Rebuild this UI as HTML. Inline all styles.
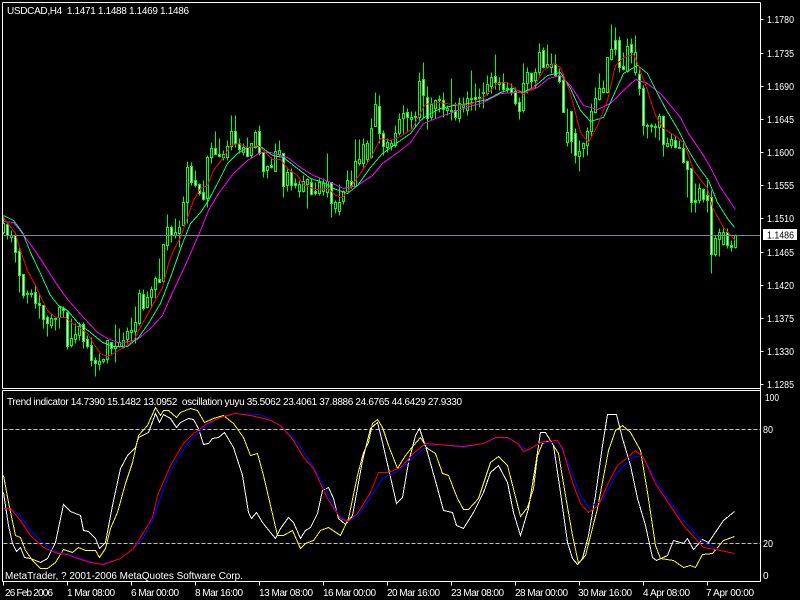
<!DOCTYPE html>
<html><head><meta charset="utf-8"><style>
html,body{margin:0;padding:0;background:#000;width:800px;height:600px;overflow:hidden}
svg{display:block}
text{font-family:"Liberation Sans",sans-serif;font-size:10px;fill:#fff}
</style></head><body>
<svg width="800" height="600" viewBox="0 0 800 600" xmlns="http://www.w3.org/2000/svg">
<rect width="800" height="600" fill="#000"/>
<g transform="translate(.5 .5)" shape-rendering="crispEdges">
<path fill="none" stroke="#00ff00" d="M3 216V234M7 222V239M11 230V242M15 232V262M19 247V292M23 274V298M27 290V303M31 289V297M35 284V308M39 293V318M43 305V328M47 315V336M51 313V328M55 317V330M59 305V328M63 306V317M67 311V349M71 318V347M75 323V343M79 322V340M83 322V348M87 335V348M91 337V366M95 357V376M99 353V370M103 358V363M107 340V363M111 342V355M115 324V362M119 328V347M123 332V348M127 327V343M131 317V340M135 306V343M139 289V325M143 289V310M147 291V308M151 286V308M155 276V298M159 258V282M163 244V282M167 214V250M171 225V242M175 218V238M179 220V247M183 196V225M187 161V223M191 162V185M195 170V187M199 183V195M203 180V200M207 155V207M211 142V163M215 131V154M219 138V157M223 150V160M227 140V160M231 115V150M235 115V147M239 138V153M243 143V155M247 137V157M251 143V157M255 130V148M259 125V155M263 152V177M267 165V178M271 157V168M275 143V171M279 140V157M283 153V197M287 167V191M291 168V190M295 178V188M299 180V197M303 175V192M307 178V208M311 178V195M315 182V195M319 178V195M323 178V195M327 153V197M331 182V217M335 200V213M339 184V215M343 190V204M347 170V191M351 170V188M355 139V187M359 139V165M363 138V167M367 140V162M371 118V158M375 92V126M379 95V143M383 130V155M387 138V152M391 140V150M395 125V147M399 113V135M403 105V133M407 108V132M411 111V128M415 111V126M419 72V120M423 62V118M427 86V129M431 97V120M435 99V118M439 95V112M443 92V117M447 105V115M451 78V120M455 102V120M459 97V122M463 97V112M467 91V115M471 70V110M475 83V110M479 88V107M483 82V108M487 75V95M491 72V93M495 54V89M499 77V90M503 73V92M507 82V93M511 83V95M515 87V105M519 97V119M523 63V112M527 67V93M531 72V90M535 68V88M539 43V75M543 47V68M547 44V68M551 53V73M555 54V77M559 68V83M563 73V112M567 108V146M571 127V153M575 128V163M579 140V171M583 142V157M587 127V155M591 103V137M595 87V113M599 73V100M603 80V93M607 57V93M611 24V60M615 27V55M619 36V72M623 52V70M627 38V72M631 38V63M635 35V75M639 66V95M643 85V135M647 123V138M651 123V132M655 123V137M659 113V140M663 115V156M667 137V147M671 133V148M675 135V148M679 140V148M683 140V163M687 160V197M691 168V212M695 183V212M699 183V203M703 188V202M707 180V212M711 190V273M715 235V256M719 228V256M723 228V245M727 228V248M731 240V251M735 234V248"/>
<path fill="#000" stroke="#00ff00" d="M2 223V232H4V223ZM10 235V237H12V235ZM26 293V294H28V293ZM30 293V294H32V293ZM50 318V325H52V318ZM58 307V317H60V307ZM70 338V345H72V338ZM74 334V339H76V334ZM78 326V335H80V326ZM98 361V364H100V361ZM102 359V361H104V359ZM106 340V359H108V340ZM114 346V348H116V346ZM118 342V346H120V342ZM122 340V347H124V340ZM126 331V339H128V331ZM130 330V332H132V330ZM134 322V331H136V322ZM138 293V323H140V293ZM146 297V307H148V297ZM150 289V297H152V289ZM154 278V289H156V278ZM162 244V281H164V244ZM166 227V245H168V227ZM174 232V235H176V232ZM178 227V233H180V227ZM182 202V225H184V202ZM186 167V202H188V167ZM206 157V198H208V157ZM210 148V157H212V148ZM222 154V157H224V154ZM226 146V157H228V146ZM230 131V146H232V131ZM242 147V152H244V147ZM250 143V155H252V143ZM254 132V147H256V132ZM266 166V170H268V166ZM274 151V171H276V151ZM278 150V154H280V150ZM286 172V185H288V172ZM298 184V191H300V184ZM302 181V191H304V181ZM306 179V184H308V179ZM318 182V193H320V182ZM322 183V191H324V183ZM326 181V192H328V181ZM334 202V208H336V202ZM338 202V211H340V202ZM342 191V201H344V191ZM346 180V191H348V180ZM354 161V186H356V161ZM358 159V163H360V159ZM362 144V163H364V144ZM366 143V159H368V143ZM370 128V157H372V128ZM374 104V126H376V104ZM386 142V147H388V142ZM390 143V146H392V143ZM394 133V145H396V133ZM398 119V133H400V119ZM402 113V118H404V113ZM410 117V119H412V117ZM414 116V117H416V116ZM418 81V117H420V81ZM430 104V117H432V104ZM434 100V108H436V100ZM438 99V100H440V99ZM446 108V110H448V108ZM450 110V111H452V110ZM458 103V118H460V103ZM462 105V107H464V105ZM466 98V110H468V98ZM470 98V99H472V98ZM478 97V98H480V97ZM482 92V93H484V92ZM486 84V93H488V84ZM490 77V86H492V77ZM498 82V84H500V82ZM506 88V89H508V88ZM522 83V110H524V83ZM526 72V83H528V72ZM534 72V80H536V72ZM538 52V72H540V52ZM546 64V67H548V64ZM550 64V67H552V64ZM566 132V142H568V132ZM578 151V156H580V151ZM582 143V148H584V143ZM586 131V145H588V131ZM590 111V131H592V111ZM594 98V112H596V98ZM598 88V99H600V88ZM602 88V92H604V88ZM606 57V92H608V57ZM610 49V59H612V49ZM626 46V71H628V46ZM634 52V72H636V52ZM658 116V127H660V116ZM666 143V146H668V143ZM670 139V145H672V139ZM698 188V200H700V188ZM714 238V254H716V238ZM718 232V239H720V232ZM722 232V244H724V232ZM734 235V247H736V235Z"/>
<path fill="#fff" stroke="#00ff00" d="M6 224V235H8V224ZM14 235V252H16V235ZM18 251V275H20V251ZM22 274V295H24V274ZM34 292V303H36V292ZM38 303V305H40V303ZM42 305V319H44V305ZM46 317V323H48V317ZM54 318V319H56V318ZM62 308V310H64V308ZM66 312V346H68V312ZM82 324V341H84V324ZM86 339V346H88V339ZM90 345V360H92V345ZM94 360V363H96V360ZM110 342V348H112V342ZM142 294V308H144V294ZM158 279V282H160V279ZM170 227V235H172V227ZM190 166V182H192V166ZM194 180V185H196V180ZM198 184V193H200V184ZM202 192V199H204V192ZM214 148V154H216V148ZM218 154V156H220V154ZM234 131V143H236V131ZM238 143V149H240V143ZM246 147V156H248V147ZM258 131V153H260V131ZM262 152V171H264V152ZM270 165V167H272V165ZM282 153V186H284V153ZM290 172V185H292V172ZM294 183V185H296V183ZM310 182V194H312V182ZM314 191V193H316V191ZM330 182V203H332V182ZM350 181V186H352V181ZM378 106V133H380V106ZM382 133V146H384V133ZM406 112V117H408V112ZM422 79V95H424V79ZM426 97V118H428V97ZM442 100V109H444V100ZM454 110V117H456V110ZM474 97V99H476V97ZM494 76V82H496V76ZM502 82V89H504V82ZM510 88V92H512V88ZM514 91V103H516V91ZM518 102V111H520V102ZM530 73V81H532V73ZM542 50V67H544V50ZM554 64V75H556V64ZM558 75V81H560V75ZM562 80V112H564V80ZM570 111V141H572V111ZM574 133V155H576V133ZM614 40V49H616V40ZM618 40V67H620V40ZM622 66V69H624V66ZM630 44V52H632V44ZM638 74V88H640V74ZM642 88V125H644V88ZM646 125V126H648V125ZM650 125V126H652V125ZM654 126V127H656V126ZM662 116V144H664V116ZM674 140V147H676V140ZM678 147V148H680V147ZM682 148V162H684V148ZM686 161V169H688V161ZM690 168V202H692V168ZM694 200V202H696V200ZM702 189V199H704V189ZM706 195V200H708V195ZM710 197V254H712V197ZM726 232V245H728V232ZM730 245V247H732V245Z"/>
<polyline fill="none" stroke="#ff00ff" points="3,221 13,222 22,233 33,248 43,263 57,285 68,300 83,317 97,332 107,338 120,343 137,339 150,328 162,315 173,290 187,260 200,230 208,210 218,193 233,173 247,160 260,152 270,152 287,157 300,167 313,175 330,182 343,188 357,185 372,175 382,163 400,150 410,142 423,123 443,115 463,108 483,102 500,93 517,92 523,92 537,87 548,78 560,75 570,85 583,105 597,109 610,103 623,90 635,79 647,83 660,93 680,117 688,133 703,155 710,167 720,187 735,209"/>
<polyline fill="none" stroke="#00ff7f" points="3,215 13,220 22,232 30,252 40,273 50,295 58,305 67,310 78,323 90,332 102,342 113,346 127,346 138,337 148,323 160,303 170,277 182,243 190,223 200,212 208,200 217,183 227,163 237,153 247,147 260,146 272,155 283,157 297,168 310,178 323,182 333,188 347,193 357,185 370,167 382,153 400,140 410,133 420,120 428,114 440,108 453,105 468,103 487,99 500,92 513,88 522,92 533,87 547,75 560,72 570,88 580,110 590,121 603,117 613,95 623,73 637,65 647,73 657,93 665,108 678,130 688,150 697,165 708,180 717,202 727,218 734,227"/>
<polyline fill="none" stroke="#ff0000" points="3,217 15,233 20,250 27,270 35,285 42,300 47,310 55,317 65,317 72,323 80,328 87,333 93,343 100,353 107,356 113,353 123,347 133,340 142,323 153,303 162,287 168,263 173,250 180,237 187,217 193,200 200,188 207,185 213,170 223,157 230,145 238,143 247,147 258,145 263,150 272,159 280,159 287,168 297,175 303,184 315,189 328,188 335,195 342,197 348,190 357,177 370,158 380,138 390,140 400,136 412,128 420,112 425,104 438,102 453,104 468,105 483,97 497,83 507,82 517,90 523,94 533,87 543,70 553,63 560,67 570,93 580,132 588,142 597,125 607,100 615,65 623,57 633,54 638,65 647,90 655,115 663,128 677,137 684,143 693,170 707,188 712,207 723,227 735,240"/>
<path fill="none" stroke="#778899" d="M3 235H760"/>
<path fill="none" stroke="#fff" d="M2 2H760M2 2V388M2 388H760M760 2V581M2 390H760M2 390V581M2 581H760"/>
<path fill="none" stroke="#fff" d="M760 19h3M760 53h3M760 86h3M760 119h3M760 152h3M760 185h3M760 218h3M760 252h3M760 285h3M760 318h3M760 351h3M760 384h3M3 581v4M67 581v4M131 581v4M195 581v4M259 581v4M323 581v4M387 581v4M451 581v4M515 581v4M579 581v4M643 581v4M707 581v4"/>
<path fill="none" stroke="#c0c0c0" stroke-dasharray="4 2" d="M3 429H760M3 543H760"/>
<polyline fill="none" stroke="#ffffff" points="3,492 8,525 12,543 16,551 20,547 24,557 30,558 40,562 47,558 55,542 63,504 70,511 80,515 83,530 88,531 95,538 99,548 105,542 112,505 120,468 127,455 135,447 138,437 148,432 155,413 159,422 163,414 170,418 176,427 180,422 188,418 193,419 198,428 203,444 208,443 212,438 218,437 224,432 230,442 233,447 242,475 248,512 251,518 256,512 262,522 270,532 275,538 280,528 288,517 293,522 300,538 305,530 310,527 317,513 322,490 328,487 333,498 338,518 345,524 352,515 362,460 370,428 377,422 382,442 388,468 396,503 402,497 408,462 415,435 419,428 427,452 437,488 443,510 452,512 456,525 463,528 473,512 483,492 490,472 498,465 507,482 513,512 520,535 528,508 535,465 540,432 545,432 553,445 560,492 567,542 572,558 577,564 582,558 588,535 595,495 602,445 607,414 616,414 622,438 630,465 637,498 645,525 652,557 656,560 667,555 673,540 683,543 687,538 693,549 702,539 708,542 723,520 734,511"/>
<polyline fill="none" stroke="#ffff00" points="3,475 8,502 15,535 20,537 25,550 32,560 40,568 47,568 55,562 63,549 72,552 78,547 85,550 95,550 99,557 105,548 110,528 117,512 125,483 132,462 138,435 147,425 155,407 160,415 163,410 168,410 176,417 180,412 190,408 197,410 204,422 213,418 223,415 233,423 243,437 250,455 257,453 263,475 270,505 277,535 283,535 292,530 300,548 305,543 313,540 320,530 328,527 340,535 348,518 357,475 363,452 368,442 372,423 377,419 382,427 388,445 397,468 405,455 413,445 420,437 427,448 435,453 442,473 448,475 457,498 463,509 468,509 478,498 490,462 498,456 507,465 520,516 527,507 533,488 537,455 542,443 550,440 558,453 565,495 572,535 578,563 585,555 597,508 608,450 615,430 622,425 630,432 640,450 647,492 655,545 660,558 673,560 683,567 690,565 695,567 702,554 712,553 723,540 734,536"/>
<polyline fill="none" stroke="#0000ff" points="3,508 10,508 20,515 30,530 43,543 57,552 67,553 80,558 100,564 120,558 133,548 143,537 153,518 163,488 173,465 187,443 200,430 217,418 233,413 260,414 270,419 283,428 297,442 313,467 327,492 338,515 348,521 358,515 370,497 382,478 397,471 413,457 427,445 437,444 463,447 483,443 497,437 510,438 527,450 530,448 542,442 558,442 568,463 580,495 588,507 602,500 617,472 632,457 642,455 657,483 683,520 703,542 720,550 734,553"/>
<polyline fill="none" stroke="#ff0000" points="3,508 10,508 20,520 30,535 43,547 57,553 67,554 77,558 90,562 103,564 120,558 133,548 143,532 152,517 157,495 170,465 183,443 193,433 207,423 220,417 235,413 250,415 263,418 270,420 280,425 293,440 303,457 313,468 327,498 340,518 347,521 357,513 370,492 378,472 388,472 400,467 413,453 425,443 437,444 463,446 483,443 495,437 507,437 517,443 523,451 530,448 542,441 557,440 562,448 572,482 580,503 588,512 598,505 608,482 617,465 627,457 635,450 643,457 655,483 663,495 683,525 703,547 720,550 734,553"/>
</g>
<rect x="763" y="229" width="34" height="11" fill="#fff"/>
<text x="7" y="14" textLength="182" lengthAdjust="spacing" xml:space="preserve">USDCAD,H4  1.1471 1.1488 1.1469 1.1486</text>
<text x="7" y="405" textLength="455" lengthAdjust="spacing" xml:space="preserve">Trend indicator 14.7390 15.1482 13.0952  oscillation yuyu 35.5062 23.4061 37.8886 24.6765 44.6429 27.9330</text>
<text x="5" y="579" textLength="238" lengthAdjust="spacing">MetaTrader, ? 2001-2006 MetaQuotes Software Corp.</text>
<g>
<text x="767" y="23" textLength="27" lengthAdjust="spacingAndGlyphs">1.1780</text><text x="767" y="57" textLength="27" lengthAdjust="spacingAndGlyphs">1.1735</text><text x="767" y="90" textLength="27" lengthAdjust="spacingAndGlyphs">1.1690</text><text x="767" y="123" textLength="27" lengthAdjust="spacingAndGlyphs">1.1645</text><text x="767" y="156" textLength="27" lengthAdjust="spacingAndGlyphs">1.1600</text><text x="767" y="189" textLength="27" lengthAdjust="spacingAndGlyphs">1.1555</text><text x="767" y="222" textLength="27" lengthAdjust="spacingAndGlyphs">1.1510</text><text x="767" y="256" textLength="27" lengthAdjust="spacingAndGlyphs">1.1465</text><text x="767" y="289" textLength="27" lengthAdjust="spacingAndGlyphs">1.1420</text><text x="767" y="322" textLength="27" lengthAdjust="spacingAndGlyphs">1.1375</text><text x="767" y="355" textLength="27" lengthAdjust="spacingAndGlyphs">1.1330</text><text x="767" y="388" textLength="27" lengthAdjust="spacingAndGlyphs">1.1285</text>
<text x="767" y="238.500" textLength="27" lengthAdjust="spacingAndGlyphs" style="fill:#000">1.1486</text>
<text x="765" y="401" textLength="14" lengthAdjust="spacingAndGlyphs">100</text><text x="763" y="433" textLength="10" lengthAdjust="spacingAndGlyphs">80</text><text x="763" y="547" textLength="10" lengthAdjust="spacingAndGlyphs">20</text><text x="763" y="579">0</text>
<text x="5" y="596" textLength="48" lengthAdjust="spacing">26 Feb 2006</text>
<text x="67" y="596" textLength="48" lengthAdjust="spacing">1 Mar 08:00</text>
<text x="131" y="596" textLength="48" lengthAdjust="spacing">6 Mar 00:00</text>
<text x="195" y="596" textLength="48" lengthAdjust="spacing">8 Mar 16:00</text>
<text x="259" y="596" textLength="54" lengthAdjust="spacing">13 Mar 08:00</text>
<text x="323" y="596" textLength="53" lengthAdjust="spacing">16 Mar 00:00</text>
<text x="387" y="596" textLength="53" lengthAdjust="spacing">20 Mar 16:00</text>
<text x="451" y="596" textLength="53" lengthAdjust="spacing">23 Mar 08:00</text>
<text x="515" y="596" textLength="53" lengthAdjust="spacing">28 Mar 00:00</text>
<text x="578" y="596" textLength="54" lengthAdjust="spacing">30 Mar 16:00</text>
<text x="643" y="596" textLength="47" lengthAdjust="spacing">4 Apr 08:00</text>
<text x="706" y="596" textLength="48" lengthAdjust="spacing">7 Apr 00:00</text>
</g>
</svg>
</body></html>
